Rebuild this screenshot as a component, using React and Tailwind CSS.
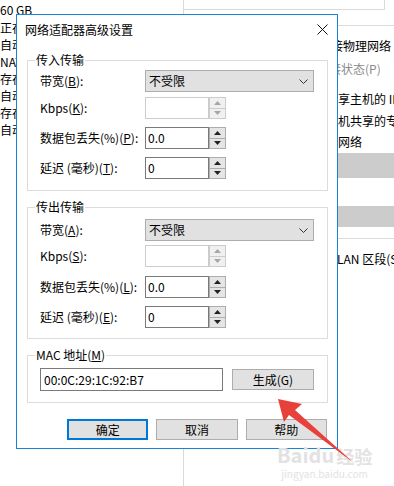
import React from 'react';

const font = "font-['Microsoft_YaHei_UI','Noto_Sans_CJK_SC',sans-serif]";

function Spin({ disabled }) {
  const edge = disabled ? 'border-[#cccccc]' : 'border-[#adadad]';
  const tri = disabled ? '#a6a6a6' : '#222';
  return (
    <div className={`flex h-[22px] w-[17px] flex-col border ${edge} bg-[#f0f0f0]`}>
      <div className={`flex flex-1 items-center justify-center border-b ${edge} ${disabled ? '' : 'bg-[#e5e5e5]'}`}>
        <svg width="7" height="4" viewBox="0 0 7 4"><path d="M0 4 L3.5 0 L7 4 Z" fill={tri} /></svg>
      </div>
      <div className={`flex flex-1 items-center justify-center ${disabled ? '' : 'bg-[#e5e5e5]'}`}>
        <svg width="7" height="4" viewBox="0 0 7 4"><path d="M0 0 L3.5 4 L7 0 Z" fill={tri} /></svg>
      </div>
    </div>
  );
}

function Label({ text, hot, tail = '):' }) {
  return (
    <div className="w-[105px] shrink-0 leading-[16px]">
      {text}(<span className="underline">{hot}</span>{tail}
    </div>
  );
}

function SpinRow({ label, hot, value, disabled, className = '' }) {
  return (
    <div className={`flex h-[22px] items-center ${className}`}>
      <Label text={label} hot={hot} />
      <div
        className={`flex h-[22px] w-[64px] items-center border bg-white pl-[2px] leading-[16px] ${
          disabled ? 'border-[#cccccc]' : 'border-[#7a7a7a]'
        }`}
      >
        {value}
      </div>
      <Spin disabled={disabled} />
    </div>
  );
}

function SelectRow({ hot }) {
  return (
    <div className="flex h-[22px] items-center">
      <Label text="带宽" hot={hot} />
      <div className="flex h-[22px] w-[169px] items-center justify-between border border-[#adadad] bg-[#e1e1e1] pl-[3px] pr-[5px] leading-[16px]">
        <span>不受限</span>
        <svg width="9" height="5" viewBox="0 0 9 5">
          <path d="M0.5 0.5 L4.5 4.5 L8.5 0.5" fill="none" stroke="#333" strokeWidth="1" />
        </svg>
      </div>
    </div>
  );
}

function Group({ title, className = '', children }) {
  return (
    <fieldset className={`w-[301px] border border-[#dcdcdc] p-0 ${className}`}>
      <legend className="ml-[7px] px-[1px] leading-[16px]">{title}</legend>
      {children}
    </fieldset>
  );
}

function Btn({ children, primary }) {
  return (
    <div
      className={`flex h-[21px] w-[82px] items-center justify-center bg-[#e1e1e1] leading-[16px] ${
        primary ? 'border-2 border-[#0078d7]' : 'border border-[#adadad]'
      }`}
    >
      {children}
    </div>
  );
}

export default function App() {
  return (
    <div className={`relative h-[486px] w-[394px] overflow-hidden bg-white text-[12px] text-black ${font}`}>
      {/* 背后的窗口：左侧列表 */}
      <div className="absolute left-0 top-0 flex w-[120px] flex-col pt-[2px] leading-[16px]">
        <div className="h-[18px]">60 GB</div>
        <div className="h-[17px]">正在运行</div>
        <div className="h-[17px]">自动检测</div>
        <div className="h-[17px]">NAT 模式</div>
        <div className="h-[17px]">存在</div>
        <div className="h-[17px]">自动检测</div>
        <div className="h-[17px]">存在</div>
        <div className="h-[17px]">自动检测</div>
      </div>

      {/* 背后的窗口：右侧设置 */}
      <div className="absolute left-[183px] top-0 flex h-[486px] w-[211px] flex-col border-l border-[#d9d9d9]">
        <div className="h-[10px] w-[201px] border-b border-r border-[#d9d9d9]" />
        <div className="ml-[154px] mt-[15px] h-px bg-[#dcdcdc]" />
        <div className="flex flex-col whitespace-nowrap leading-[16px]">
          <div className="ml-[135px] mt-[12px]">连接物理网络</div>
          <div className="ml-[133px] mt-[7px] text-[#8c8c8c]">连接状态(P)</div>
          <div className="ml-[142px] mt-[14px]">共享主机的 IP 地址</div>
          <div className="ml-[142px] mt-[6px]">主机共享的专用网络</div>
          <div className="ml-[130px] mt-[5px]">专用网络</div>
        </div>
        <div className="mt-[3px] h-[25px] bg-[#cccccc]" />
        <div className="mt-[28px] h-[21px] bg-[#cccccc]" />
        <div className="mt-[11px] h-px bg-[#dcdcdc]" />
        <div className="ml-[153px] mt-[12px] whitespace-nowrap leading-[16px]">LAN 区段(S)...</div>
      </div>

      {/* 网络适配器高级设置 对话框 */}
      <div className="absolute left-[16px] top-[14px] flex h-[435px] w-[322px] flex-col border border-[#1883d7] bg-white">
        <div className="flex h-[29px] shrink-0 items-center justify-between pl-[8px] pr-[9px]">
          <span className="leading-[16px]">网络适配器高级设置</span>
          <svg width="11" height="11" viewBox="0 0 11 11">
            <path d="M0.5 0.5 L10.5 10.5 M10.5 0.5 L0.5 10.5" stroke="#111" strokeWidth="1" />
          </svg>
        </div>

        <div className="flex flex-col px-[10px]">
          <Group title="传入传输" className="mt-[8px]">
            <div className="flex flex-col pb-[11px] pl-[12px] pt-[2px]">
              <SelectRow hot="B" />
              <SpinRow label="Kbps" hot="K" value="" disabled className="mt-[5px]" />
              <SpinRow label="数据包丢失(%)" hot="P" value="0.0" className="mt-[8px]" />
              <SpinRow label="延迟 (毫秒)" hot="T" value="0" className="mt-[8px]" />
            </div>
          </Group>

          <Group title="传出传输" className="mt-[8px]">
            <div className="flex flex-col pb-[10px] pl-[12px] pt-[4px]">
              <SelectRow hot="A" />
              <SpinRow label="Kbps" hot="S" value="" disabled className="mt-[4px]" />
              <SpinRow label="数据包丢失(%)" hot="L" value="0.0" className="mt-[9px]" />
              <SpinRow label="延迟 (毫秒)" hot="E" value="0" className="mt-[8px]" />
            </div>
          </Group>

          <Group title={<>MAC 地址(<span className="underline">M</span>)</>} className="mt-[8px]">
            <div className="flex items-center pb-[11px] pl-[12px] pt-[5px]">
              <div className="flex h-[23px] w-[183px] items-center border border-[#7a7a7a] pl-[3px] leading-[16px]">
                00:0C:29:1C:92:B7
              </div>
              <div className="ml-[9px]">
                <Btn>生成(G)</Btn>
              </div>
            </div>
          </Group>

          <div className="mt-[16px] flex gap-[8px] pl-[40px]">
            <Btn primary>确定</Btn>
            <Btn>取消</Btn>
            <Btn>帮助</Btn>
          </div>
        </div>
      </div>

      {/* 水印 */}
      <div className="absolute left-[277px] top-[445px] flex flex-col items-center leading-none text-[#e2e2e2]">
        <div className="flex items-end text-[20px] font-bold">
          <span>Bai</span>
          <span>du</span>
          <span className="ml-[2px] text-[18px]">经验</span>
        </div>
        <div className="mt-[4px] text-[10px]">jingyan.baidu.com</div>
      </div>

      {/* 红色箭头 */}
      <svg className="absolute left-0 top-0" width="394" height="486" viewBox="0 0 394 486">
        <polygon points="278,399 302,404 295,410 354,463 289,415 284,422" fill="#e8403a" />
      </svg>
    </div>
  );
}
